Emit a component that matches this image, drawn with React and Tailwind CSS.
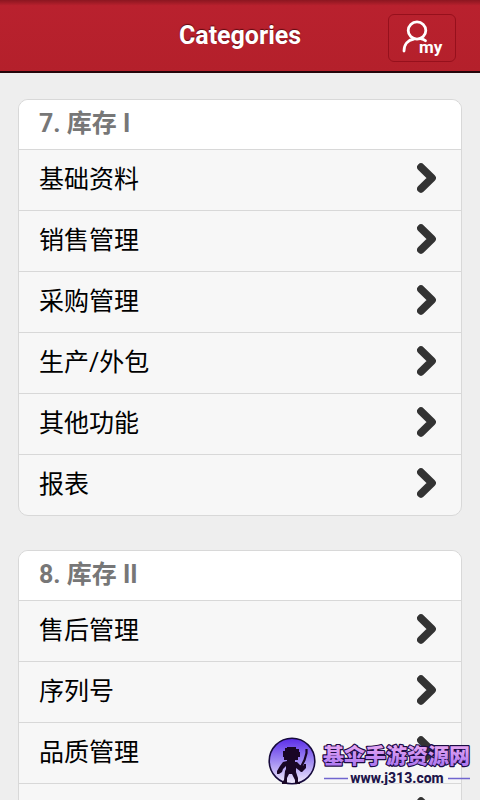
import React from 'react';

const sections = [
  {
    id: 7,
    title: '7. 库存 I',
    items: ['基础资料', '销售管理', '采购管理', '生产/外包', '其他功能', '报表'],
  },
  {
    id: 8,
    title: '8. 库存 II',
    items: ['售后管理', '序列号', '品质管理', ''],
  },
];

const Chevron = () => (
  <svg width="20" height="30" viewBox="0 0 20 30" className="shrink-0" aria-hidden="true">
    <path
      d="M4 4.2 L15 15 L4 25.8"
      fill="none"
      stroke="#333333"
      strokeWidth="7.8"
      strokeLinecap="round"
      strokeLinejoin="round"
    />
  </svg>
);

const Header = () => (
  <header className="grid grid-cols-[1fr_auto_1fr] items-center h-[73px] px-6 pt-1 border-b-2 border-[#24050a] bg-linear-to-b from-[#8c1620] from-0% via-[#b9212e] via-8% to-[#b4202b]">
    <span />
    <h1 className="pb-1 text-[25px] leading-8 font-bold text-white [text-shadow:0_-1px_1px_#5c0a12]">Categories</h1>
    <button
      type="button"
      aria-label="my"
      className="justify-self-end h-12 w-[68px] flex justify-center items-center border border-[#96101c] rounded-md"
    >
      <svg width="44" height="38" viewBox="0 0 44 38" aria-hidden="true">
        <g fill="none" stroke="#fff" strokeWidth="2.8" strokeLinecap="round">
          <ellipse cx="17" cy="11.5" rx="8.8" ry="8.6" />
          <path d="M4 32 C4 25.5 8 21 13.8 20" />
          <path d="M20.5 19.6 C22.5 20 24.3 20.6 25.5 21.8" />
        </g>
        <text x="19" y="34" fill="#fff" fontSize="17" fontWeight="700">my</text>
      </svg>
    </button>
  </header>
);

const Section = ({ title, items }) => (
  <section className="border border-[#d8d8d8] rounded-[10px] overflow-hidden bg-[#f7f7f7]">
    <h2 className="h-[49px] px-5 bg-white text-[25px] leading-[48px] font-bold text-[#777777]">{title}</h2>
    <ul>
      {items.map((item, index) => (
        <li key={index} className="border-t border-[#d8d8d8]">
          <a href={`#${item}`} className="flex items-center justify-between h-[60px] pl-5 pr-6 pb-1 text-[25px] leading-8 text-black">
            <span className="pt-1">{item}</span>
            <Chevron />
          </a>
        </li>
      ))}
    </ul>
  </section>
);

const Watermark = () => (
  <div className="absolute right-2 bottom-3 flex items-center gap-1">
    <svg width="50" height="52" viewBox="0 0 50 52" aria-hidden="true">
      <defs>
        <linearGradient id="badge" x1="0" y1="0" x2="0" y2="1">
          <stop offset="0" stopColor="#5a2be8" />
          <stop offset="0.5" stopColor="#a08af2" />
          <stop offset="1" stopColor="#f4eefc" />
        </linearGradient>
      </defs>
      <circle cx="26" cy="25" r="22.8" fill="url(#badge)" stroke="#160a3c" strokeWidth="1.6" />
      {/* pixel figure holding a sword */}
      <path
        fill="#190625"
        d="M21 11h9v2h3v3h1v5h-2v3h-3v2h2l3 3 3 1 1-2h2v4l-3 3h-3l-4-3v4l2 6v4h2v2h-5v-4l-3-6h-3l-2 4v6h-5v-2l2-2 1-9 1-2v-3l-3 3-1 3-3 2h-2v-3l3-5 3-4 4-1v-1h-3v-3h-1v-6h2v-3h2z"
      />
      <path d="M35.5 36v-6l3-6 2-7v-4" stroke="#190625" strokeWidth="2.2" fill="none" />
    </svg>
    <svg width="152" height="46" viewBox="0 0 152 46" role="img" aria-label="基伞手游资源网 www.j313.com">
      <defs>
        <linearGradient id="brand" x1="0" y1="0" x2="0" y2="1">
          <stop offset="0.1" stopColor="#e3a5f2" />
          <stop offset="1" stopColor="#a672f0" />
        </linearGradient>
      </defs>
      <text
        x="3"
        y="24"
        fontSize="21"
        fontWeight="900"
        fill="url(#brand)"
        stroke="#1d0b45"
        strokeWidth="2.4"
        strokeLinejoin="round"
        paintOrder="stroke"
      >
        基伞手游资源网
      </text>
      <text x="77" y="44" textAnchor="middle" fontSize="14" fontWeight="800" fill="#20154a" className="font-[Roboto,sans-serif]">
        www.j313.com
      </text>
      <path d="M4 39.5h24M128 39.5h22" stroke="#7065cf" strokeWidth="1.5" />
    </svg>
  </div>
);

const App = () => {
  return (
    <div className="relative h-screen overflow-hidden bg-[#eeeeee] font-[Roboto,'Noto_Sans_CJK_SC',sans-serif]">
      <Header />
      <main className="flex flex-col gap-[34px] px-[18px] pt-[26px]">
        {sections.map((section) => (
          <Section key={section.id} title={section.title} items={section.items} />
        ))}
      </main>
      <Watermark />
    </div>
  );
};

export default App;
